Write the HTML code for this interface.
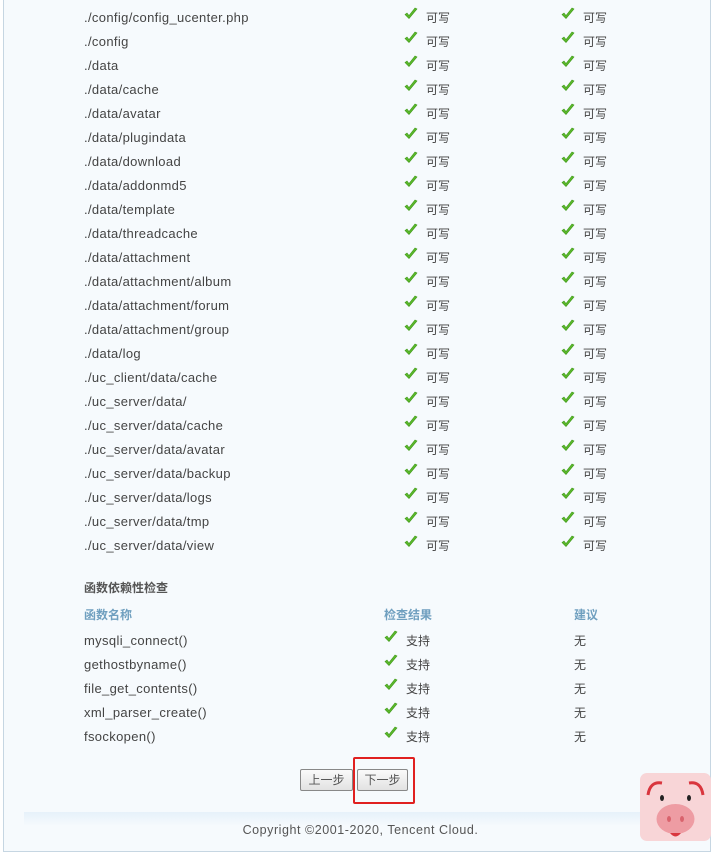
<!DOCTYPE html>
<html><head><meta charset="utf-8"><style>
body{margin:0;width:721px;height:853px;background:#fff;font-family:"Liberation Sans","Noto Sans CJK SC",sans-serif;position:relative;overflow:hidden;color:#444;font-size:13px}
.box{position:absolute;left:3px;top:-2px;width:706px;height:853px;border:1px solid #c6d6e2;border-top:none;background:#f6fafd}
.r{position:absolute;height:24px;line-height:24px;white-space:nowrap;letter-spacing:0.35px}
.ck{position:absolute;width:14px;height:14px}
.t{position:absolute;font-size:12px;letter-spacing:0}
.btn{position:absolute;top:769px;height:20px;border:1px solid #888;border-radius:2px;background:linear-gradient(#fafafa,#e2e2e2);font-size:12px;line-height:20px;text-align:center;color:#555}
</style></head><body>
<div class="box"></div>
<div id="rows"></div>
<div class="r" style="left:84px;top:576px;font-weight:bold;font-size:12px;color:#555;letter-spacing:0">函数依赖性检查</div>
<div class="r" style="left:84px;top:603px;font-weight:bold;font-size:12px;color:#6f9fbf;letter-spacing:0">函数名称</div>
<div class="r" style="left:384px;top:603px;font-weight:bold;font-size:12px;color:#6f9fbf;letter-spacing:0">检查结果</div>
<div class="r" style="left:574px;top:603px;font-weight:bold;font-size:12px;color:#6f9fbf;letter-spacing:0">建议</div>
<div id="fns"></div>
<div class="btn" style="left:300px;width:51px">上一步</div>
<div class="btn" style="left:357px;width:49px">下一步</div>
<div style="position:absolute;left:353px;top:757px;width:58px;height:43px;border:2px solid #e02020;border-radius:2px"></div>
<div style="position:absolute;left:24px;top:812px;width:640px;height:14px;background:linear-gradient(#e6f1fa,#f6fafd)"></div>
<div style="position:absolute;left:0;width:721px;top:823px;text-align:center;font-size:12.5px;letter-spacing:0.55px;color:#555">Copyright ©2001-2020, Tencent Cloud.</div>
<svg style="position:absolute;left:640px;top:773px" width="71" height="68" viewBox="0 0 71 68">
<rect width="71" height="68" rx="7" fill="#f8d5d7"/>
<path d="M8 22 Q10 8 22 10" stroke="#d9363e" stroke-width="3" fill="none"/>
<path d="M63 22 Q61 8 49 10" stroke="#d9363e" stroke-width="3" fill="none"/>
<ellipse cx="22" cy="25" rx="2" ry="3" fill="#222"/><ellipse cx="49" cy="25" rx="2" ry="3" fill="#222"/>
<ellipse cx="35.5" cy="46" rx="19" ry="15" fill="#ee9ca3"/>
<ellipse cx="29" cy="46" rx="2" ry="3" fill="#d9636d"/><ellipse cx="42" cy="46" rx="2" ry="3" fill="#d9636d"/>
<path d="M30 60 Q35.5 67 41 60Z" fill="#d9363e"/>
</svg>
<script>
const ck='<svg viewBox="0 0 14 14" width="14" height="14"><path d="M1 7.5 L5 11.5 L13 2 L11 1 L5 8.5 L3 6 Z" fill="#5cb82c" stroke="#3f9a1a" stroke-width="0.6"/></svg>';
const p=["./config/config_ucenter.php","./config","./data","./data/cache","./data/avatar","./data/plugindata","./data/download","./data/addonmd5","./data/template","./data/threadcache","./data/attachment","./data/attachment/album","./data/attachment/forum","./data/attachment/group","./data/log","./uc_client/data/cache","./uc_server/data/","./uc_server/data/cache","./uc_server/data/avatar","./uc_server/data/backup","./uc_server/data/logs","./uc_server/data/tmp","./uc_server/data/view"];
let h='';p.forEach((s,i)=>{const y=6+i*24;h+=`<div class="r" style="left:84px;top:${y}px">${s}</div><div class="ck" style="left:404px;top:${y+1}px">${ck}</div><div class="r t" style="left:426px;top:${y}px">可写</div><div class="ck" style="left:561px;top:${y+1}px">${ck}</div><div class="r t" style="left:583px;top:${y}px">可写</div>`});
document.getElementById('rows').innerHTML=h;
const f=["mysqli_connect()","gethostbyname()","file_get_contents()","xml_parser_create()","fsockopen()"];h='';
f.forEach((s,i)=>{const y=629+i*24;h+=`<div class="r" style="left:84px;top:${y}px">${s}</div><div class="ck" style="left:384px;top:${y+1}px">${ck}</div><div class="r t" style="left:406px;top:${y}px">支持</div><div class="r t" style="left:574px;top:${y}px">无</div>`});
document.getElementById('fns').innerHTML=h;
</script>
</body></html>
